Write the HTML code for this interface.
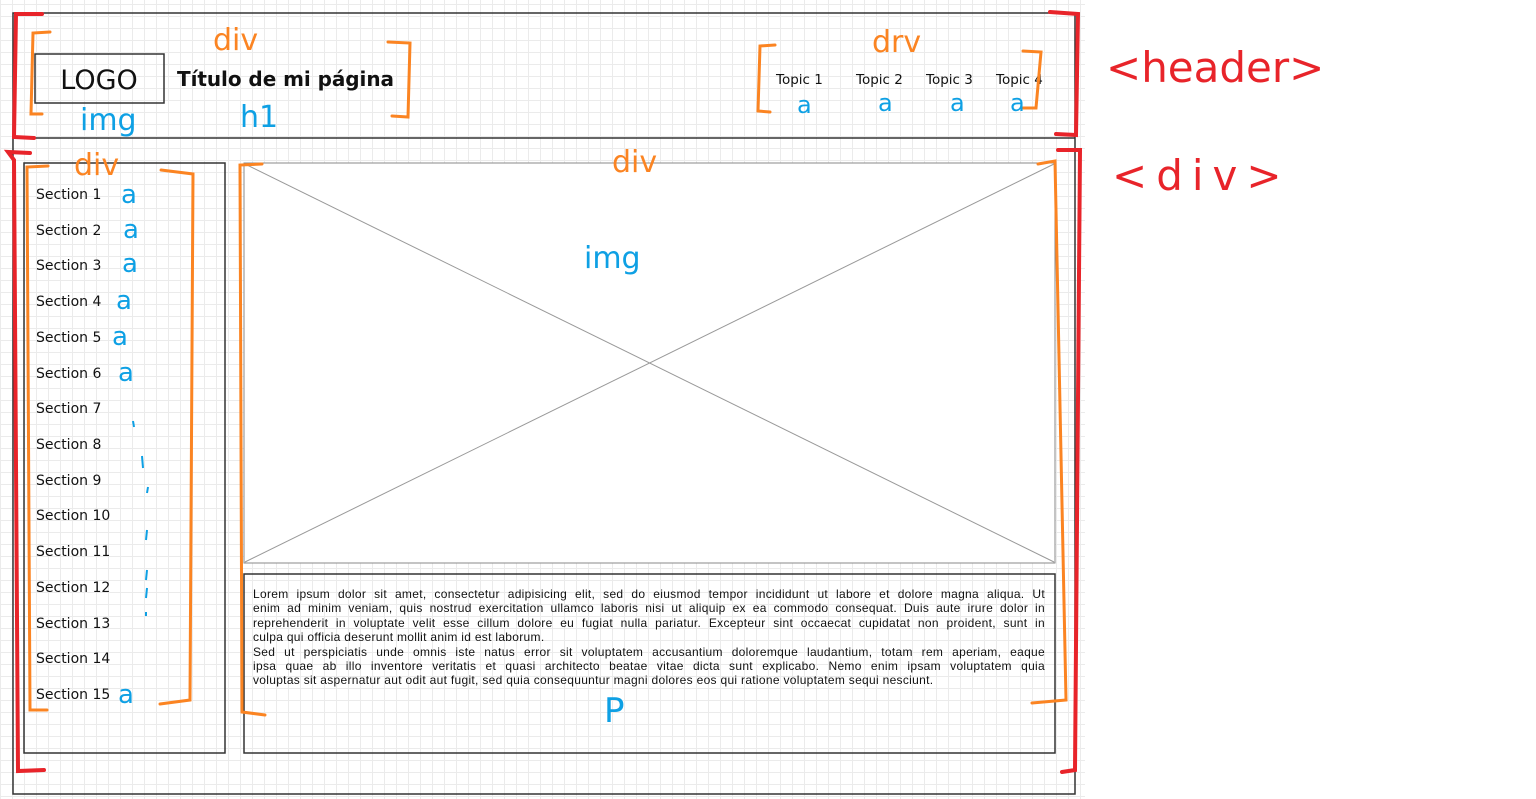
<!DOCTYPE html>
<html><head><meta charset="utf-8"><style>
html,body{margin:0;padding:0;background:#fff;width:1536px;height:799px;overflow:hidden}
#g{position:absolute;left:0;top:0;width:1085px;height:799px;background-color:#fff;
background-image:linear-gradient(#ebebeb 1px,transparent 1px),linear-gradient(90deg,#ebebeb 1px,transparent 1px);
background-size:12px 12px;background-position:0 4px}
svg{position:absolute;left:0;top:0}
text{font-family:"DejaVu Sans","Liberation Sans",sans-serif}
#p{position:absolute;left:253px;top:587px;width:792px;font:12px/14.4px "Liberation Sans",sans-serif;letter-spacing:0.3px;color:#111}
#p div{white-space:nowrap;text-align:justify;text-align-last:justify}
#p div.l{text-align-last:left}
</style></head><body>
<div id="g"></div>
<svg width="1536" height="799" viewBox="0 0 1536 799">
<g fill="none" stroke="#333" stroke-width="1.5">
<rect x="13" y="13" width="1062" height="781"/>
<line x1="13" y1="138" x2="1075" y2="138"/>
<rect x="35" y="54" width="129" height="49"/>
<rect x="24" y="163" width="201" height="590"/>
<rect x="244" y="574" width="811" height="179"/>
</g>
<rect x="244" y="163" width="811" height="400" fill="#fff" stroke="#888" stroke-width="1"/>
<g stroke="#999" stroke-width="1"><line x1="245" y1="164" x2="1054" y2="562"/><line x1="1054" y1="164" x2="245" y2="562"/></g>
<text x="99" y="89" font-size="27" text-anchor="middle" fill="#111" font-family="Liberation Sans">LOGO</text>
<text x="177" y="86" font-size="20" font-weight="bold" fill="#111" font-family="Liberation Sans" textLength="217">Título de mi página</text>
<g font-size="13.5" fill="#111">
<text x="776" y="84">Topic 1</text><text x="856" y="84">Topic 2</text><text x="926" y="84">Topic 3</text><text x="996" y="84">Topic 4</text>
</g>
<g font-size="14" fill="#111">
<text x="36" y="199">Section 1</text><text x="36" y="235">Section 2</text><text x="36" y="270">Section 3</text><text x="36" y="306">Section 4</text><text x="36" y="342">Section 5</text><text x="36" y="378">Section 6</text><text x="36" y="413">Section 7</text><text x="36" y="449">Section 8</text><text x="36" y="485">Section 9</text><text x="36" y="520">Section 10</text><text x="36" y="556">Section 11</text><text x="36" y="592">Section 12</text><text x="36" y="628">Section 13</text><text x="36" y="663">Section 14</text><text x="36" y="699">Section 15</text>
</g>
<g fill="none" stroke="#e8242a" stroke-width="4" stroke-linecap="round">
<path d="M42 14 L16 14 L14 137 L34 138"/>
<path d="M1050 12 L1078 14 L1076 135 L1056 134"/>
<path d="M30 153 L8 152 L14 160 L18 771 L44 770"/>
<path d="M1058 150 L1080 150 L1075 770 L1062 772"/>
</g>
<text x="1106" y="82" font-size="42" fill="#e8242a" font-family="Liberation Sans">&lt;header&gt;</text>
<text x="1112" y="190" font-size="42" fill="#e8242a" font-family="Liberation Sans" letter-spacing="9">&lt;div&gt;</text>
<g fill="none" stroke="#fb8422" stroke-width="3" stroke-linecap="round">
<path d="M50 32 L33 33 L31 114 L42 114"/>
<path d="M388 42 L410 43 L408 117 L392 116"/>
<path d="M775 45 L760 46 L758 111 L770 112"/>
<path d="M1023 51 L1041 52 L1036 108 L1023 108"/>
<path d="M48 166 L27 167 L30 710 L47 710"/>
<path d="M161 170 L193 174 L190 700 L160 704"/>
<path d="M262 164 L240 165 L242 712 L265 715"/>
<path d="M1038 164 L1055 161 L1066 700 L1032 703"/>
</g>
<g font-size="30" fill="#fb8422" font-family="Liberation Sans">
<text x="213" y="50">div</text><text x="872" y="52">drv</text><text x="74" y="175">div</text><text x="612" y="172">div</text>
</g>
<g font-size="30" fill="#0ea0e4" font-family="Liberation Sans">
<text x="80" y="130">img</text><text x="240" y="127">h1</text><text x="584" y="268">img</text>
<text x="797" y="113" font-size="24">a</text><text x="878" y="111" font-size="24">a</text><text x="950" y="111" font-size="24">a</text><text x="1010" y="111" font-size="24">a</text>
<text x="121" y="203" font-size="26">a</text><text x="123" y="238" font-size="26">a</text><text x="122" y="272" font-size="26">a</text><text x="116" y="309" font-size="26">a</text><text x="112" y="345" font-size="26">a</text><text x="118" y="381" font-size="26">a</text><text x="118" y="703" font-size="26">a</text>
<text x="604" y="722" font-size="34">P</text>
</g>
<g stroke="#0ea0e4" stroke-width="2"><line x1="133" y1="421" x2="134" y2="427"/><line x1="142" y1="456" x2="143" y2="468"/><line x1="148" y1="487" x2="147" y2="493"/><line x1="147" y1="530" x2="146" y2="540"/><line x1="147" y1="570" x2="146" y2="580"/><line x1="147" y1="588" x2="146" y2="598"/><line x1="146" y1="612" x2="146" y2="616"/></g>
</svg>
<div id="p">
<div>Lorem ipsum dolor sit amet, consectetur adipisicing elit, sed do eiusmod tempor incididunt ut labore et dolore magna aliqua. Ut</div>
<div>enim ad minim veniam, quis nostrud exercitation ullamco laboris nisi ut aliquip ex ea commodo consequat. Duis aute irure dolor in</div>
<div>reprehenderit in voluptate velit esse cillum dolore eu fugiat nulla pariatur. Excepteur sint occaecat cupidatat non proident, sunt in</div>
<div class="l">culpa qui officia deserunt mollit anim id est laborum.</div>
<div>Sed ut perspiciatis unde omnis iste natus error sit voluptatem accusantium doloremque laudantium, totam rem aperiam, eaque</div>
<div>ipsa quae ab illo inventore veritatis et quasi architecto beatae vitae dicta sunt explicabo. Nemo enim ipsam voluptatem quia</div>
<div class="l">voluptas sit aspernatur aut odit aut fugit, sed quia consequuntur magni dolores eos qui ratione voluptatem sequi nesciunt.</div>
</div>
</body></html>
